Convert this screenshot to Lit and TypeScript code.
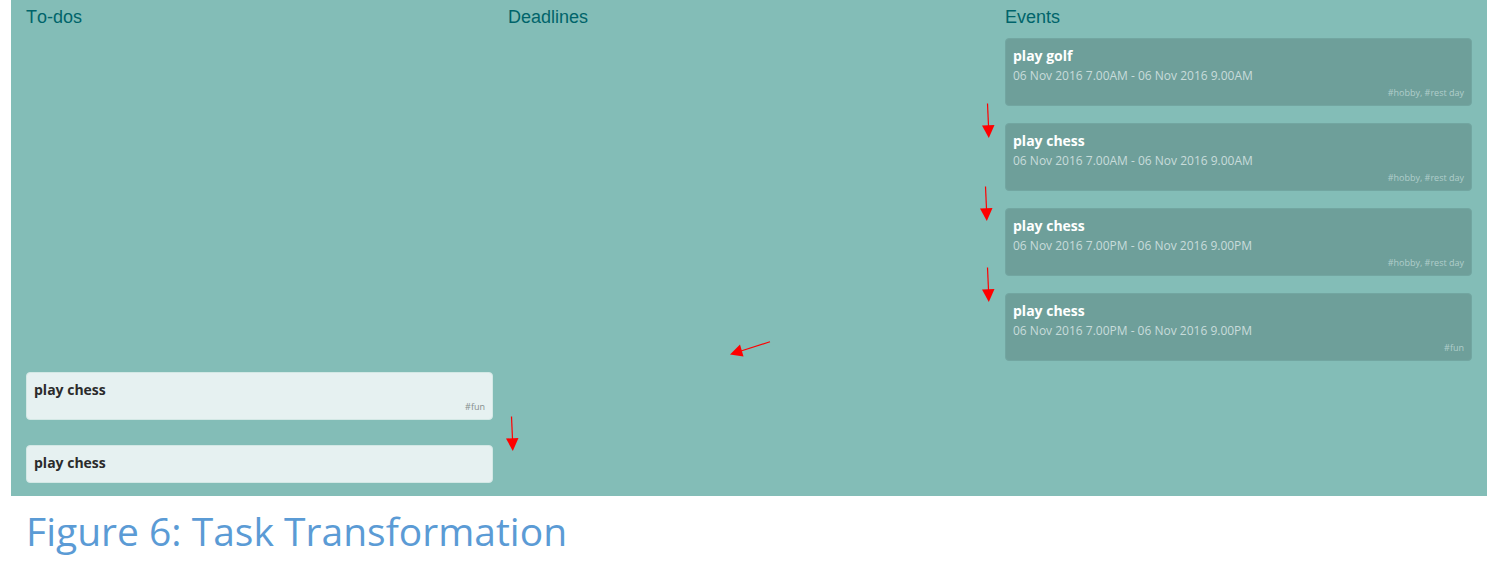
import { LitElement, html, css, nothing } from "lit";
import { customElement, property } from "lit/decorators.js";

interface Task {
  title: string;
  time?: string;
  tags?: string;
}

const todos: Task[] = [
  { title: "play chess", tags: "#fun" },
  { title: "play chess" },
];

const events: Task[] = [
  { title: "play golf", time: "06 Nov 2016 7.00AM - 06 Nov 2016 9.00AM", tags: "#hobby, #rest day" },
  { title: "play chess", time: "06 Nov 2016 7.00AM - 06 Nov 2016 9.00AM", tags: "#hobby, #rest day" },
  { title: "play chess", time: "06 Nov 2016 7.00PM - 06 Nov 2016 9.00PM", tags: "#hobby, #rest day" },
  { title: "play chess", time: "06 Nov 2016 7.00PM - 06 Nov 2016 9.00PM", tags: "#fun" },
];

@customElement("task-card")
class TaskCard extends LitElement {
  @property({ attribute: false }) task!: Task;

  static styles = css`
    :host {
      display: block;
      box-sizing: border-box;
      min-height: 38px;
      padding: 7px 7px 6px;
      border: 1px solid var(--card-edge);
      border-radius: 4px;
      background: var(--card-fill);
      font-family: "Open Sans", "Noto Sans", sans-serif;
    }
    .title {
      margin: 0;
      font-size: 14px;
      line-height: 20px;
      font-weight: 700;
      color: var(--card-title);
    }
    .time {
      margin: 0;
      font-size: 12px;
      line-height: 20px;
      color: #c8dcda;
    }
    .tags {
      margin: 0;
      font-size: 9px;
      line-height: 13px;
      text-align: right;
      color: var(--card-tags);
    }
  `;

  render() {
    const { title, time, tags } = this.task;
    return html`
      <h3 class="title">${title}</h3>
      ${time ? html`<p class="time">${time}</p>` : nothing}
      ${tags ? html`<p class="tags">${tags}</p>` : nothing}
    `;
  }
}

@customElement("app-root")
class AppRoot extends LitElement {
  static styles = css`
    :host {
      display: block;
      background: #fff;
    }
    .figure {
      margin: 0;
      padding-left: 11px;
    }
    .board {
      position: relative;
      display: grid;
      grid-template-columns: 467fr 482fr 467fr;
      gap: 15px;
      padding: 7px 15px 13px;
      min-height: 496px;
      box-sizing: border-box;
      background: #83bdb7;
    }
    .column {
      display: flex;
      flex-direction: column;
      min-width: 0;
    }
    .heading {
      margin: 0 0 10px;
      font: 400 18px/21px "Liberation Sans", Arial, sans-serif;
      font-kerning: none;
      color: #00646a;
    }
    .cards {
      flex: 1;
      display: flex;
      flex-direction: column;
      gap: 17px;
    }
    .done {
      --card-fill: #6e9f9a;
      --card-edge: #72a6a1;
      --card-title: #fff;
      --card-tags: #b0cecb;
    }
    .open {
      --card-fill: #e6f1f1;
      --card-edge: #d3e8e5;
      --card-title: #2b2b2b;
      --card-tags: #858e8d;
      justify-content: flex-end;
      gap: 25px;
    }
    .arrow {
      position: absolute;
      overflow: visible;
      fill: #f00;
      stroke: #f00;
    }
    .down {
      width: 14px;
      height: 35px;
    }
    .across {
      width: 41px;
      height: 16px;
      left: 48.7%;
      top: 341px;
    }
    .caption {
      padding: 11px 15px;
      font: 400 39px/48px "Open Sans", sans-serif;
      color: #5b9bd5;
    }
  `;

  private downArrow(left: number, top: number) {
    return html`<svg class="arrow down" style="left:${left}%;top:${top}px" viewBox="0 0 14 35" aria-hidden="true">
      <path d="M6.5 0.5L7.5 23" stroke-width="1.2" />
      <path d="M1 22.5L13.5 22L7.8 35Z" stroke="none" />
    </svg>`;
  }

  render() {
    return html`
      <figure class="figure">
        <div class="board">
          <section class="column">
            <h2 class="heading">To-dos</h2>
            <div class="cards open">${todos.map((t) => html`<task-card .task=${t}></task-card>`)}</div>
          </section>
          <section class="column">
            <h2 class="heading">Deadlines</h2>
          </section>
          <section class="column">
            <h2 class="heading">Events</h2>
            <div class="cards done">${events.map((t) => html`<task-card .task=${t}></task-card>`)}</div>
          </section>
          ${this.downArrow(65.7, 103)} ${this.downArrow(65.6, 186)} ${this.downArrow(65.7, 267)}
          ${this.downArrow(33.5, 416)}
          <svg class="arrow across" viewBox="0 0 41 16" aria-hidden="true">
            <path d="M40 0.8L11 10" stroke-width="1.2" />
            <path d="M0 13.5L10 3.5L13.5 15.5Z" stroke="none" />
          </svg>
        </div>
        <figcaption class="caption">Figure 6: Task Transformation</figcaption>
      </figure>
    `;
  }
}
